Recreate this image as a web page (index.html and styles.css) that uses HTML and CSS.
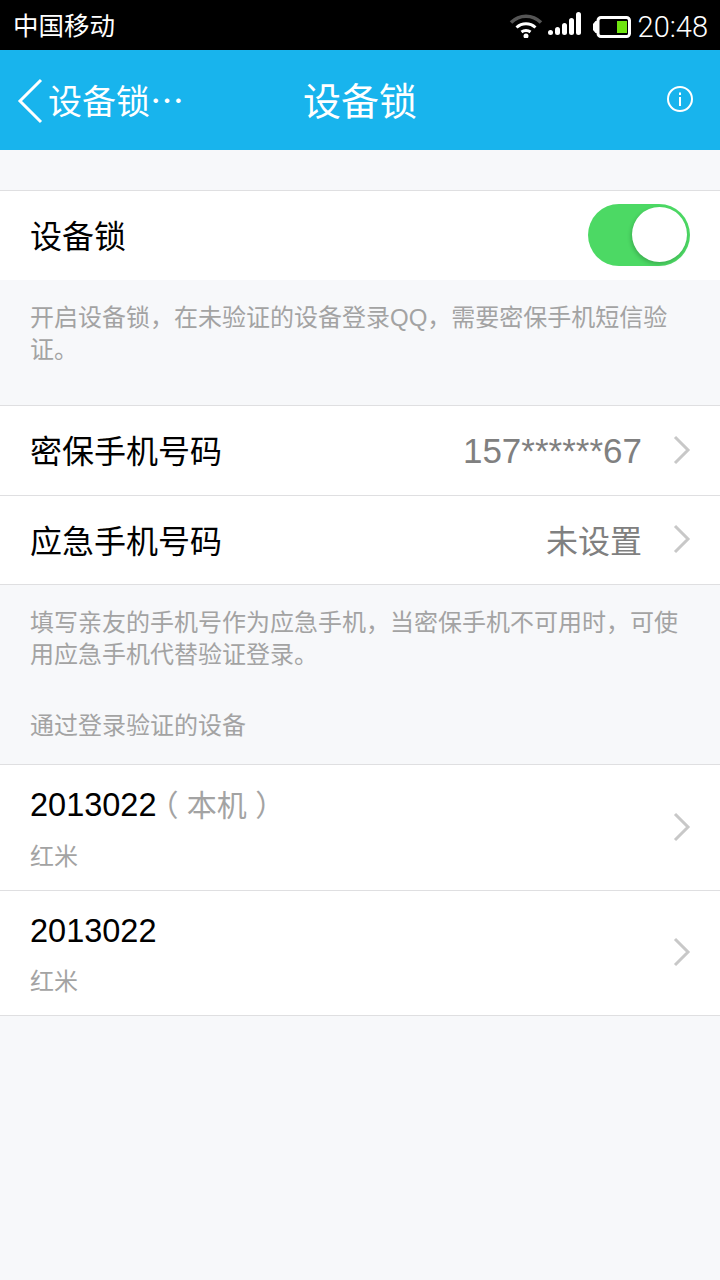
FILE: index.html
```html
<!DOCTYPE html>
<html lang="zh-CN">
<head>
<meta charset="UTF-8">
<meta name="viewport" content="width=device-width, initial-scale=1.0">
<title>设备锁</title>
<link rel="stylesheet" href="styles.css">
</head>
<body>
<!-- Status bar -->
<div class="status-bar">
  <span class="carrier">中国移动</span>
  <div class="status-icons">
    <svg class="icon-wifi" width="34" height="26" viewBox="0 0 34 26">
      <path d="M2 10.500C10.500 2 23.500 2 32 10.500" fill="none" stroke="#555" stroke-width="3.500"/>
      <path d="M7.500 15.500C13 10.500 21 10.500 26.500 15.500" fill="none" stroke="#fff" stroke-width="3"/>
      <path d="M12.500 20C15 18 19 18 21.500 20" fill="none" stroke="#fff" stroke-width="3"/>
      <circle cx="17" cy="24" r="2.500" fill="#fff"/>
    </svg>
    <svg class="icon-signal" width="34" height="24" viewBox="0 0 34 24">
      <rect x="0" y="18" width="5" height="5" rx="2.500" fill="#fff"/>
      <rect x="7" y="15" width="5" height="8" rx="2.500" fill="#fff"/>
      <rect x="14" y="11" width="5" height="12" rx="2.500" fill="#fff"/>
      <rect x="21" y="6" width="5" height="17" rx="2.500" fill="#fff"/>
      <rect x="28" y="0" width="5" height="23" rx="2.500" fill="#fff"/>
    </svg>
    <svg class="icon-battery" width="38" height="22" viewBox="0 0 38 22">
      <path d="M4 5H2.500L0 8V14L2.500 17H4Z" fill="#fff"/>
      <rect x="5" y="1.500" width="31.500" height="19" rx="3" fill="#000" stroke="#fff" stroke-width="3"/>
      <rect x="24" y="5" width="10" height="12" fill="#6fe510"/>
    </svg>
    <span class="clock">20:48</span>
  </div>
</div>

<!-- Nav bar -->
<div class="nav-bar">
  <div class="nav-back">
    <svg width="28" height="46" viewBox="0 0 28 46">
      <path d="M24 2L3 23L24 44" fill="none" stroke="#fff" stroke-width="3"/>
    </svg>
    <span>设备锁⋯</span>
  </div>
  <div class="nav-title">设备锁</div>
  <svg class="nav-info" width="28" height="28" viewBox="0 0 28 28">
    <circle cx="14" cy="14" r="12" fill="none" stroke="#fff" stroke-width="2"/>
    <rect x="13" y="12" width="2" height="9" fill="#fff"/>
    <rect x="13" y="7.500" width="2" height="2.500" fill="#fff"/>
  </svg>
</div>

<div class="group first-group">
  <div class="row">
    <span class="row-label">设备锁</span>
    <div class="switch"><div class="knob"></div></div>
  </div>
</div>
<p class="note note-lock">开启设备锁，在未验证的设备登录QQ，需要密保手机短信验证。</p>

<div class="group">
  <div class="row">
    <span class="row-label">密保手机号码</span>
    <span class="row-value row-number">157******67</span>
    <svg class="chevron" width="18" height="30" viewBox="0 0 18 30"><path d="M2 2L15 15L2 28" fill="none" stroke="#c8c8c8" stroke-width="3"/></svg>
  </div>
  <div class="row row-short">
    <span class="row-label">应急手机号码</span>
    <span class="row-value">未设置</span>
    <svg class="chevron" width="18" height="30" viewBox="0 0 18 30"><path d="M2 2L15 15L2 28" fill="none" stroke="#c8c8c8" stroke-width="3"/></svg>
  </div>
</div>
<p class="note note-backup">填写亲友的手机号作为应急手机，当密保手机不可用时，可使用应急手机代替验证登录。</p>
<p class="section-title">通过登录验证的设备</p>

<div class="group">
  <div class="device">
    <div class="device-info">
      <div class="device-name">2013022<span class="device-tag">（ 本机 ）</span></div>
      <div class="device-model">红米</div>
    </div>
    <svg class="chevron" width="18" height="30" viewBox="0 0 18 30"><path d="M2 2L15 15L2 28" fill="none" stroke="#c8c8c8" stroke-width="3"/></svg>
  </div>
  <div class="device device-last">
    <div class="device-info">
      <div class="device-name">2013022</div>
      <div class="device-model">红米</div>
    </div>
    <svg class="chevron" width="18" height="30" viewBox="0 0 18 30"><path d="M2 2L15 15L2 28" fill="none" stroke="#c8c8c8" stroke-width="3"/></svg>
  </div>
</div>
</body>
</html>
```

FILE: styles.css
```css
/* General styles */
body {
  font-family: "Liberation Sans", "Noto Sans CJK SC", sans-serif;
  margin: 0;
  padding: 0;
  width: 720px;
  height: 1280px;
  overflow: hidden;
  background-color: #f7f8fa;
  color: #000;
}

/* Status bar */
.status-bar {
  height: 50px;
  background-color: #000;
  color: #fff;
  display: flex;
  align-items: center;
  justify-content: space-between;
  padding: 0 12px 0 13px;
}

.carrier {
  font-size: 25.500px;
  margin-top: -3px;
}

.status-icons {
  display: flex;
  align-items: center;
}

.icon-wifi {
  margin-right: 5px;
}

.icon-signal {
  margin-right: 11px;
  margin-top: -2px;
}

.icon-battery {
  margin-right: 7px;
  margin-top: 3px;
}

.clock {
  font-family: "Roboto", sans-serif;
  font-size: 29px;
  font-weight: 300;
  margin-top: 4px;
}

/* Nav bar */
.nav-bar {
  height: 100px;
  background-color: #18b4ed;
  color: #fff;
  position: relative;
  display: flex;
  align-items: center;
  justify-content: center;
}

.nav-back {
  position: absolute;
  left: 17px;
  top: 27px;
  display: flex;
  align-items: center;
  font-family: "Noto Sans CJK SC", sans-serif;
  font-size: 34px;
}

.nav-back span {
  margin-left: 3px;
  margin-top: -2px;
}

.nav-title {
  font-size: 38px;
  margin-top: -4px;
}

.nav-info {
  position: absolute;
  right: 26px;
  top: 35px;
}

/* Groups and rows */
.group {
  background-color: #fff;
  border-top: 1px solid #dfdfe1;
}

.first-group {
  margin-top: 40px;
}

.row {
  height: 89px;
  display: flex;
  align-items: center;
  padding: 0 29px 0 30px;
  border-bottom: 1px solid #dfdfe1;
}

.row-short {
  height: 88px;
}

.first-group .row {
  border-bottom: none;
  padding-right: 30px;
}

.row-label {
  font-size: 32px;
  flex: 1;
  margin-top: -4px;
}

.row-value {
  font-size: 32px;
  color: #808080;
  margin-right: 31px;
  margin-top: -4px;
}

.row-number {
  font-size: 35px;
  margin-top: 0;
}

.row-short .row-label,
.row-short .row-value {
  margin-top: -2px;
}

.chevron {
  flex-shrink: 0;
  margin-top: -2px;
}

/* Notes */
.note {
  margin: 0;
  padding: 22px 30px 0;
  font-size: 24px;
  line-height: 32px;
  color: #a3a3a3;
}

.note-lock {
  height: 103px;
}

.note-backup {
  height: 99px;
}

.section-title {
  margin: 0;
  padding: 0 30px;
  height: 58px;
  font-size: 24px;
  line-height: 40px;
  color: #a3a3a3;
}

/* Device list */
.device {
  height: 125px;
  display: flex;
  align-items: center;
  padding: 0 29px 0 30px;
  border-bottom: 1px solid #dfdfe1;
}

.device-last {
  height: 124px;
}

.device-info {
  flex: 1;
  align-self: flex-start;
  padding-top: 20px;
}

.device-name {
  font-size: 32.500px;
  line-height: 40px;
}

.device-tag {
  font-size: 30px;
  color: #a3a3a3;
  margin-left: -8px;
}

.device-model {
  font-size: 24px;
  line-height: 32px;
  margin-top: 15px;
  color: #a3a3a3;
}

/* Switch */
.switch {
  width: 102px;
  height: 62px;
  background-color: #4cd964;
  border-radius: 31px;
  position: relative;
  margin-top: -2px;
}

.knob {
  position: absolute;
  top: 3px;
  right: 3px;
  width: 55px;
  height: 55px;
  background-color: #fff;
  border-radius: 50%;
  box-shadow: -1px 2px 4px rgba(0, 0, 0, 0.2);
}
```
